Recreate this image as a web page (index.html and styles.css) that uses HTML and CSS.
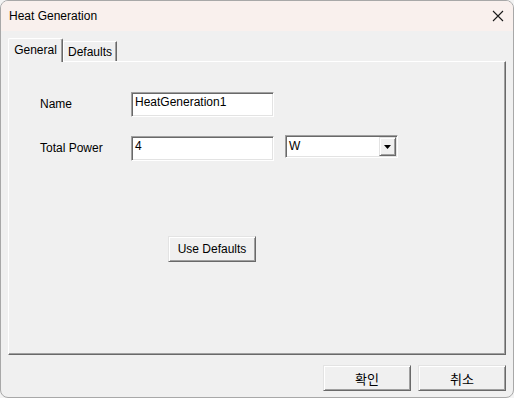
FILE: index.html
```html
<!DOCTYPE html>
<html>
<head>
<meta charset="utf-8">
<link rel="stylesheet" href="styles.css">
</head>
<body>
<div class="window">
  <div class="titlebar">
    <span class="title">Heat Generation</span>
    <svg class="close" width="12" height="12" viewBox="0 0 12 12"><path d="M1 1 L11 11 M11 1 L1 11" stroke="#1a1a1a" stroke-width="1.1" fill="none"/></svg>
  </div>
  <div class="content">
    <div class="tabs">
      <div class="tab active">General</div>
      <div class="tab">Defaults</div>
    </div>
    <div class="panel">
      <div class="form">
        <div class="label">Name</div>
        <div class="field">HeatGeneration1</div>
        <div class="spacer"></div>
        <div class="label">Total Power</div>
        <div class="field">4</div>
        <div class="combo">
          <span class="combo-text">W</span>
          <span class="combo-btn"><svg width="7" height="4" viewBox="0 0 7 4"><path d="M0 0 H7 L3.5 4 Z" fill="#000"/></svg></span>
        </div>
      </div>
      <div class="defaults-row">
        <button class="btn">Use Defaults</button>
      </div>
    </div>
    <div class="footer">
      <button class="btn footer-btn">확인</button>
      <button class="btn footer-btn">취소</button>
    </div>
  </div>
</div>
</body>
</html>
```
FILE: styles.css
```css
html, body {
  margin: 0;
  padding: 0;
  background: #f3f3f3;
}
body {
  font-family: "Liberation Sans", "Noto Sans CJK KR", sans-serif;
  font-size: 12px;
  color: #000;
}
.window {
  width: 514px;
  height: 398px;
  box-sizing: border-box;
  border: 1px solid #a8a8a8;
  border-radius: 8px;
  background: #f0f0f0;
  overflow: hidden;
}
.titlebar {
  height: 30px;
  background: #f9f0ed;
  display: flex;
  align-items: center;
  justify-content: space-between;
  padding: 0 9px 0 8px;
}
.title {
  font-size: 12px;
  color: #000;
}
.content {
  padding: 7px 7px 0 7px;
}
.tabs {
  display: flex;
  align-items: flex-end;
  height: 23px;
  position: relative;
  z-index: 1;
}
.tab {
  box-sizing: border-box;
  height: 20px;
  width: 54px;
  text-align: center;
  padding: 3px 0 0 0;
  background: #f0f0f0;
  border-top: 1px solid #fff;
  border-left: 1px solid #fff;
  border-right: 1px solid #696969;
  box-shadow: inset -1px 0 0 #a0a0a0;
  line-height: 15px;
}
.tab.active {
  height: 24px;
  width: 55px;
  margin-bottom: -1px;
  padding: 4px 0 0 0;
  border-radius: 2px 2px 0 0;
}
.panel {
  height: 294px;
  box-sizing: border-box;
  border-top: 1px solid #fff;
  border-left: 1px solid #fff;
  border-right: 1px solid #696969;
  border-bottom: 1px solid #696969;
  box-shadow: inset -1px -1px 0 #a0a0a0;
  padding: 29px 0 0 31px;
}
.form {
  display: grid;
  grid-template-columns: 91px 143px 113px;
  row-gap: 18px;
  align-items: center;
}
.label {
  line-height: 25px;
  padding-top: 1px;
}
.field {
  box-sizing: border-box;
  height: 25px;
  background: #fff;
  border-top: 1px solid #a0a0a0;
  border-left: 1px solid #a0a0a0;
  border-right: 1px solid #fff;
  border-bottom: 1px solid #fff;
  box-shadow: inset 1px 1px 0 #696969, inset -1px -1px 0 #e3e3e3;
  padding: 2px 3px 0 3px;
  line-height: 15px;
}
.combo {
  box-sizing: border-box;
  margin-left: 11px;
  width: 113px;
  height: 23px;
  align-self: start;
  background: #fff;
  border-top: 1px solid #a0a0a0;
  border-left: 1px solid #a0a0a0;
  border-right: 1px solid #fff;
  border-bottom: 1px solid #fff;
  box-shadow: inset 1px 1px 0 #696969, inset -1px -1px 0 #e3e3e3;
  display: flex;
  align-items: center;
  justify-content: space-between;
  padding: 1px 1px 1px 3px;
}
.combo-text {
  line-height: 14px;
  margin-top: -2px;
}
.combo-btn {
  box-sizing: border-box;
  width: 17px;
  height: 19px;
  background: #f0f0f0;
  border-top: 1px solid #e3e3e3;
  border-left: 1px solid #e3e3e3;
  border-right: 1px solid #696969;
  border-bottom: 1px solid #696969;
  box-shadow: inset 1px 1px 0 #fff, inset -1px -1px 0 #a0a0a0;
  display: flex;
  align-items: center;
  justify-content: center;
}
.defaults-row {
  margin-top: 75px;
  padding-left: 128px;
}
.btn {
  box-sizing: border-box;
  width: 88px;
  height: 26px;
  font-family: "Liberation Sans", "Noto Sans CJK KR", sans-serif;
  font-size: 12px;
  color: #000;
  background: #f0f0f0;
  border-top: 1px solid #e3e3e3;
  border-left: 1px solid #e3e3e3;
  border-right: 1px solid #696969;
  border-bottom: 1px solid #696969;
  box-shadow: inset 1px 1px 0 #fff, inset -1px -1px 0 #a0a0a0;
  padding: 0;
  margin: 0;
}
.footer {
  display: flex;
  justify-content: flex-end;
  gap: 7px;
  margin-top: 10px;
}
.footer-btn {
  font-size: 13px;
}
```
